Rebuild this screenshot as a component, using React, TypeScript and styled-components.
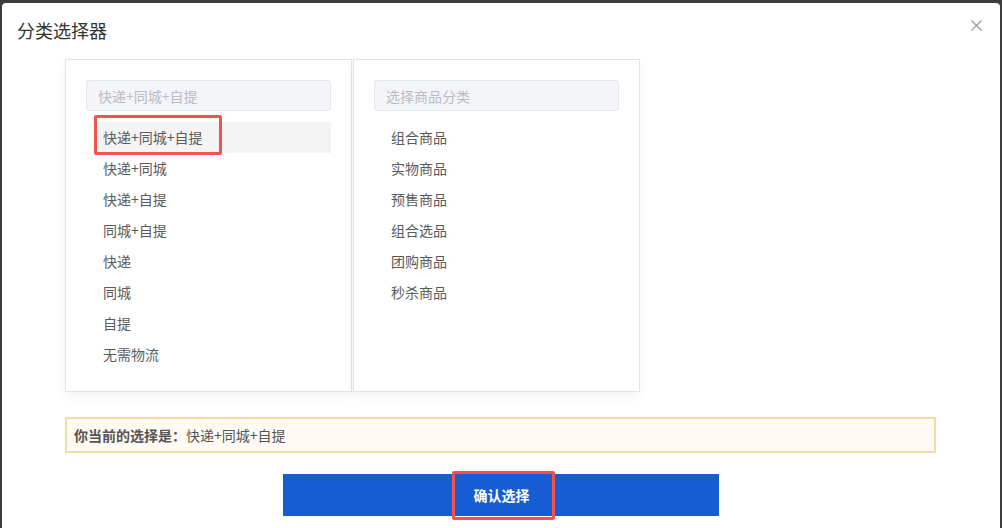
import styled, { createGlobalStyle } from 'styled-components'

const GlobalStyle = createGlobalStyle`
  html, body {
    margin: 0;
    padding: 0;
    background: #3d3d3d;
    font-family: "Noto Sans CJK SC", "Noto Sans", "Liberation Sans", sans-serif;
    overflow: hidden;
  }
  * { box-sizing: border-box; }
`

const Modal = styled.div`
  margin: 3px 2px 0;
  height: calc(100vh - 3px);
  background: #fff;
  border-radius: 4px 4px 0 0;
`

const Header = styled.div`
  height: 53px;
  display: flex;
  justify-content: space-between;
  padding: 0 17px 0 15px;
`

const Title = styled.h2`
  margin: 0;
  align-self: center;
  font-size: 18px;
  font-weight: 400;
  color: #333;
`

const Close = styled.button`
  margin-top: 15px;
  width: 14px;
  height: 14px;
  padding: 0;
  border: 0;
  background: none;
  display: flex;
  align-items: center;
  justify-content: center;
  cursor: pointer;
`

const Body = styled.div`
  padding: 3px 64px 0 63px;
`

const Panels = styled.div`
  display: flex;
  gap: 1px;
`

const Panel = styled.div`
  width: 287px;
  padding: 20px 20px 21px;
  border: 1px solid #e3e3e3;
  background: #fff;
  box-shadow: 0 4px 10px rgba(0, 0, 0, 0.06);
`

const Search = styled.input`
  display: block;
  width: 100%;
  height: 31px;
  padding: 0 11px;
  border: 1px solid #e4e7ee;
  border-radius: 3px;
  background: #f4f5f9;
  font: inherit;
  font-size: 14px;
  color: #333;
  outline: none;
  &::placeholder { color: #b9bcc2; }
`

const List = styled.ul`
  list-style: none;
  margin: 11px 0 0;
  padding: 0;
`

const Item = styled.li<{ $active?: boolean }>`
  position: relative;
  height: 31px;
  line-height: 31px;
  margin-left: 8px;
  padding-left: 9px;
  font-size: 14px;
  color: #5a5a5a;
  background: ${p => (p.$active ? '#f4f4f4' : 'transparent')};
`

const Highlight = styled.span`
  position: absolute;
  left: 0;
  top: -7px;
  width: 128px;
  height: 40px;
  border: 3px solid #f2534f;
  border-radius: 2px;
  pointer-events: none;
`

const Notice = styled.div`
  margin-top: 25px;
  height: 36px;
  line-height: 32px;
  padding: 0 7px;
  border: 2px solid #fbd9a4;
  background: #fffaf3;
  font-size: 14px;
  color: #555;
  b { font-weight: 700; }
`

const ButtonRow = styled.div`
  margin-top: 21px;
  display: flex;
  justify-content: center;
`

const ConfirmButton = styled.button`
  width: 436px;
  height: 42px;
  margin-left: 1px;
  border: 0;
  background: #165dd4;
  color: #fff;
  font: inherit;
  font-size: 14px;
  font-weight: 700;
  display: flex;
  align-items: center;
  justify-content: center;
  cursor: pointer;
`

const Mark = styled.span`
  height: 49px;
  margin-left: 4px;
  display: inline-flex;
  align-items: center;
  padding: 0 22px 0 19px;
  border: 3px solid #f2534f;
  border-radius: 2px;
`

const delivery = ['快递+同城+自提', '快递+同城', '快递+自提', '同城+自提', '快递', '同城', '自提', '无需物流']
const categories = ['组合商品', '实物商品', '预售商品', '组合选品', '团购商品', '秒杀商品']

function App() {
  return (
    <>
      <GlobalStyle />
      <Modal>
        <Header>
          <Title>分类选择器</Title>
          <Close aria-label="关闭">
            <svg width="11" height="11" viewBox="0 0 11 11">
              <path d="M0.5 0.5 L10.5 10.5 M10.5 0.5 L0.5 10.5" stroke="#9a9a9a" strokeWidth="1.3" />
            </svg>
          </Close>
        </Header>
        <Body>
          <Panels>
            <Panel>
              <Search placeholder="快递+同城+自提" />
              <List>
                {delivery.map((d, i) => (
                  <Item key={d} $active={i === 0}>
                    {i === 0 && <Highlight />}
                    {d}
                  </Item>
                ))}
              </List>
            </Panel>
            <Panel>
              <Search placeholder="选择商品分类" />
              <List>
                {categories.map(c => (
                  <Item key={c}>{c}</Item>
                ))}
              </List>
            </Panel>
          </Panels>
          <Notice>
            <b>你当前的选择是：</b>快递+同城+自提
          </Notice>
          <ButtonRow>
            <ConfirmButton>
              <Mark>确认选择</Mark>
            </ConfirmButton>
          </ButtonRow>
        </Body>
      </Modal>
    </>
  )
}

export default App
